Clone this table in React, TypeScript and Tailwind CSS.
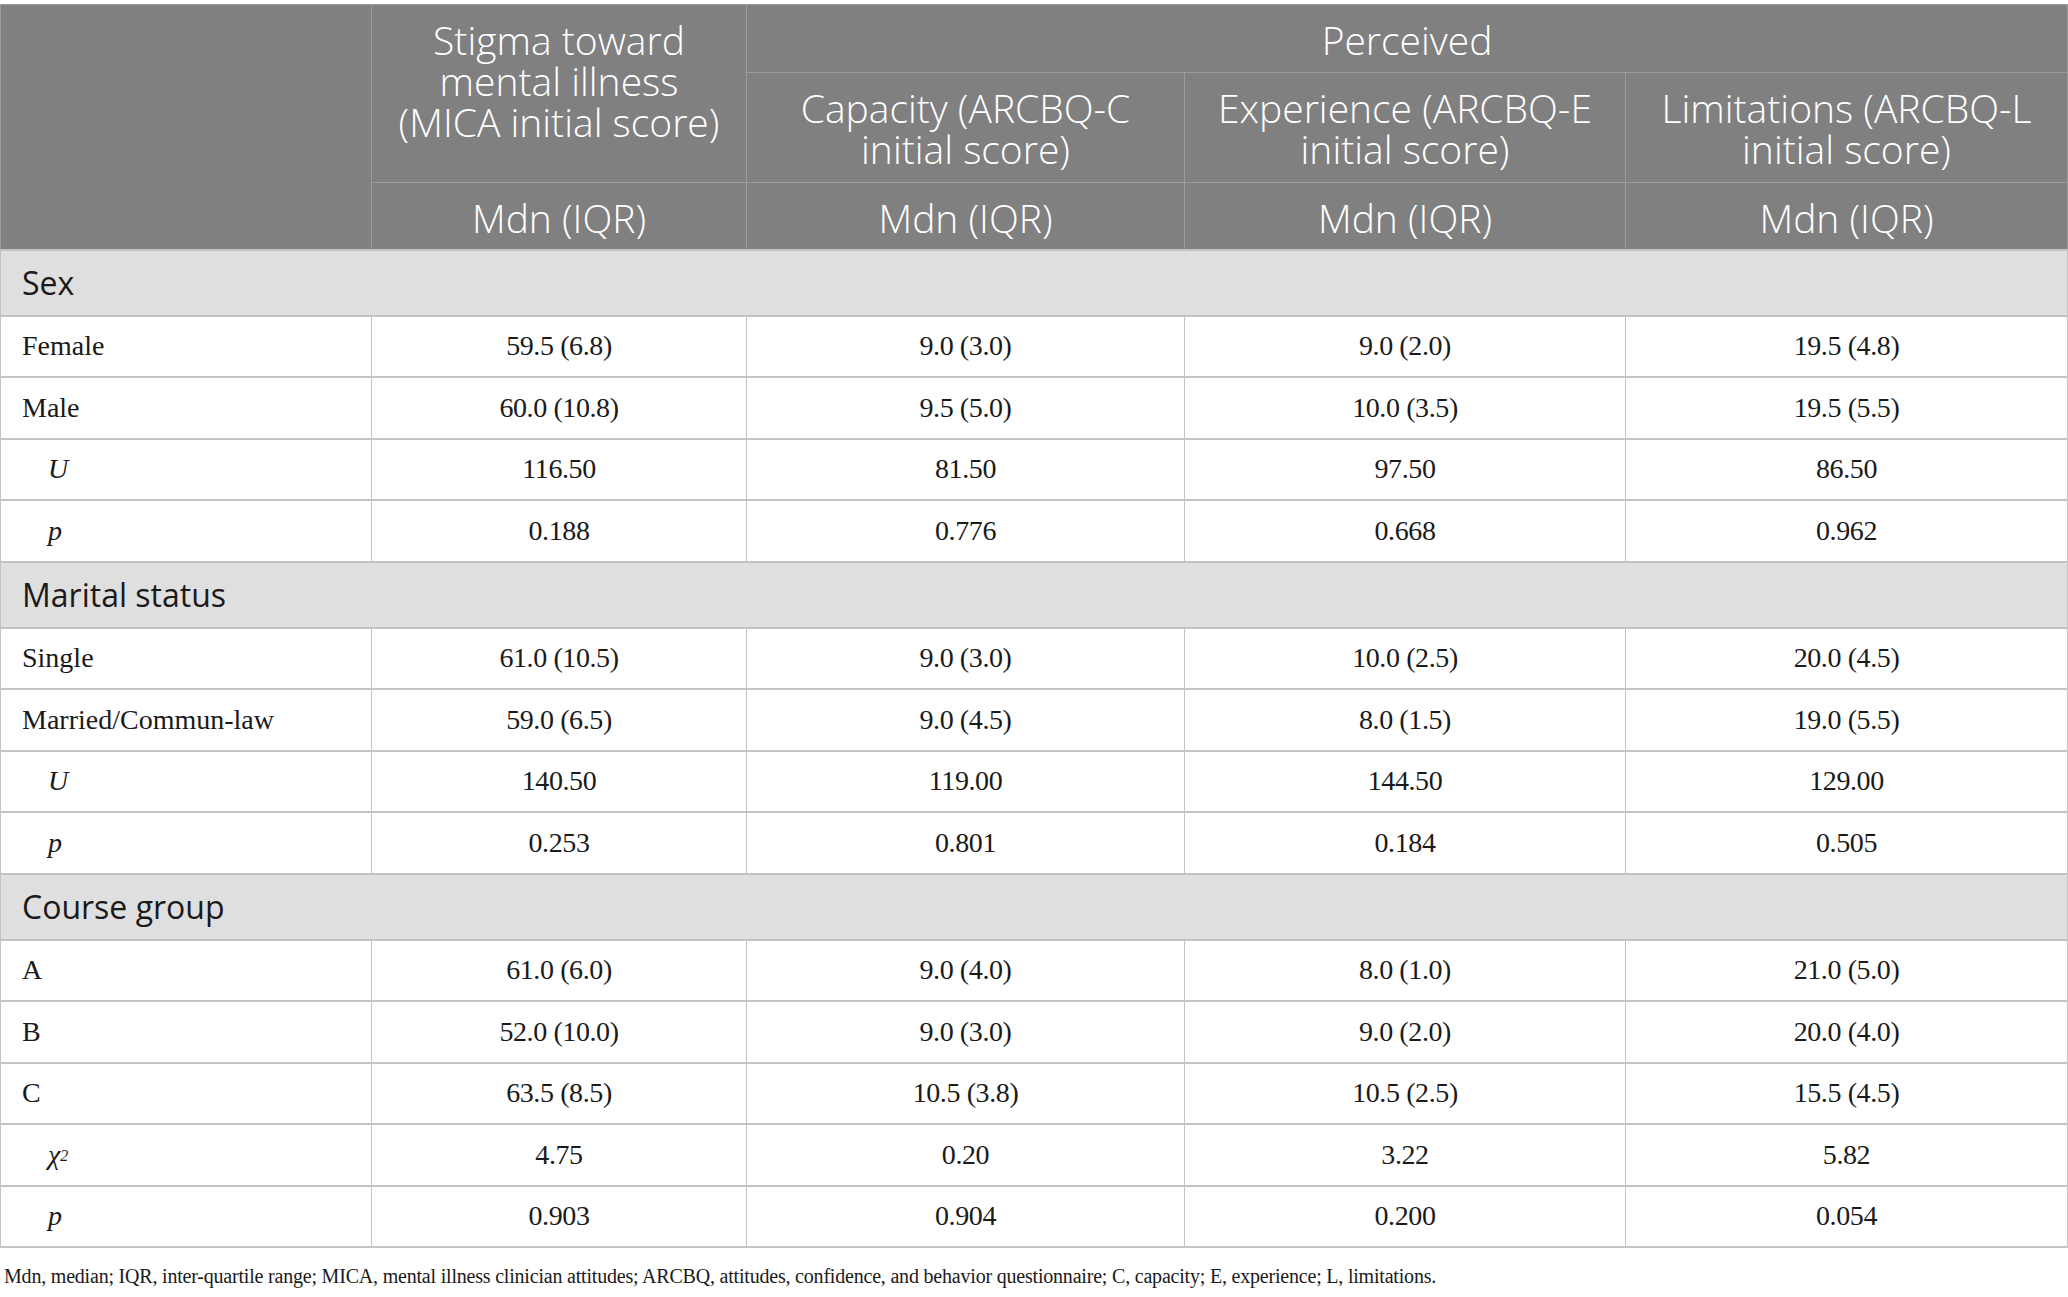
import React from 'react';

// Tabela: estigma e atitudes por sexo, estado civil e grupo de curso

type Row = { label: React.ReactNode; values: string[]; sub?: boolean };
type Group = { title: string; rows: Row[] };

const groups: Group[] = [
  {
    title: 'Sex',
    rows: [
      { label: 'Female', values: ['59.5 (6.8)', '9.0 (3.0)', '9.0 (2.0)', '19.5 (4.8)'] },
      { label: 'Male', values: ['60.0 (10.8)', '9.5 (5.0)', '10.0 (3.5)', '19.5 (5.5)'] },
      { label: 'U', values: ['116.50', '81.50', '97.50', '86.50'], sub: true },
      { label: 'p', values: ['0.188', '0.776', '0.668', '0.962'], sub: true },
    ],
  },
  {
    title: 'Marital status',
    rows: [
      { label: 'Single', values: ['61.0 (10.5)', '9.0 (3.0)', '10.0 (2.5)', '20.0 (4.5)'] },
      { label: 'Married/Commun-law', values: ['59.0 (6.5)', '9.0 (4.5)', '8.0 (1.5)', '19.0 (5.5)'] },
      { label: 'U', values: ['140.50', '119.00', '144.50', '129.00'], sub: true },
      { label: 'p', values: ['0.253', '0.801', '0.184', '0.505'], sub: true },
    ],
  },
  {
    title: 'Course group',
    rows: [
      { label: 'A', values: ['61.0 (6.0)', '9.0 (4.0)', '8.0 (1.0)', '21.0 (5.0)'] },
      { label: 'B', values: ['52.0 (10.0)', '9.0 (3.0)', '9.0 (2.0)', '20.0 (4.0)'] },
      { label: 'C', values: ['63.5 (8.5)', '10.5 (3.8)', '10.5 (2.5)', '15.5 (4.5)'] },
      {
        label: (
          <>
            χ<sup className="text-[16px] relative -top-[3px]">2</sup>
          </>
        ),
        values: ['4.75', '0.20', '3.22', '5.82'],
        sub: true,
      },
      { label: 'p', values: ['0.903', '0.904', '0.200', '0.054'], sub: true },
    ],
  },
];

const th =
  'border border-[#9c9c9c] bg-[#808080] align-top text-center text-white font-light px-2 pt-[14px] pb-[10px]';
const td = 'border-x border-y-2 border-[#c3c3c3] px-3 h-[61.5px]';

export default function App() {
  return (
    <div className="bg-white min-h-screen w-[2068px] pt-[4px] font-['Liberation_Serif',serif] text-[#1a1a1a]">
      <table className="w-[2067px] table-fixed border-collapse">
        <colgroup>
          <col className="w-[371px]" />
          <col className="w-[375px]" />
          <col className="w-[438px]" />
          <col className="w-[441px]" />
          <col className="w-[442px]" />
        </colgroup>
        <thead className="font-['Open_Sans',sans-serif] text-[39px] leading-[41px]">
          <tr className="h-[68px]">
            <th rowSpan={3} className={th}></th>
            <th rowSpan={2} className={th}>
              Stigma toward
              <br />
              mental illness
              <br />
              (MICA initial score)
            </th>
            <th colSpan={3} className={th}>
              Perceived
            </th>
          </tr>
          <tr className="h-[110px]">
            <th className={th}>
              Capacity (ARCBQ-C
              <br />
              initial score)
            </th>
            <th className={th}>
              Experience (ARCBQ-E
              <br />
              initial score)
            </th>
            <th className={th}>
              Limitations (ARCBQ-L
              <br />
              initial score)
            </th>
          </tr>
          <tr className="h-[67px]">
            <th className={th}>Mdn (IQR)</th>
            <th className={th}>Mdn (IQR)</th>
            <th className={th}>Mdn (IQR)</th>
            <th className={th}>Mdn (IQR)</th>
          </tr>
        </thead>
        <tbody className="text-[28px]">
          {groups.map((g) => (
            <React.Fragment key={g.title}>
              <tr className="h-[66px]">
                <td
                  colSpan={5}
                  className="border-x border-y-2 border-[#c3c3c3] bg-[#e0dfe0] px-[21px] font-['Open_Sans',sans-serif] text-[32px] text-[#1a1a1a]"
                >
                  {g.title}
                </td>
              </tr>
              {g.rows.map((r, i) => (
                <tr key={i}>
                  <td className={`${td} ${r.sub ? 'pl-[47px] italic' : 'pl-[21px]'}`}>{r.label}</td>
                  {r.values.map((v, j) => (
                    <td key={j} className={`${td} text-center tracking-[-0.4px]`}>
                      {v}
                    </td>
                  ))}
                </tr>
              ))}
            </React.Fragment>
          ))}
        </tbody>
      </table>
      <p className="pl-[4px] pt-[13px] text-[20px] tracking-[-0.2px] text-[#1a1a1a]">
        Mdn, median; IQR, inter-quartile range; MICA, mental illness clinician attitudes; ARCBQ, attitudes,
        confidence, and behavior questionnaire; C, capacity; E, experience; L, limitations.
      </p>
    </div>
  );
}
